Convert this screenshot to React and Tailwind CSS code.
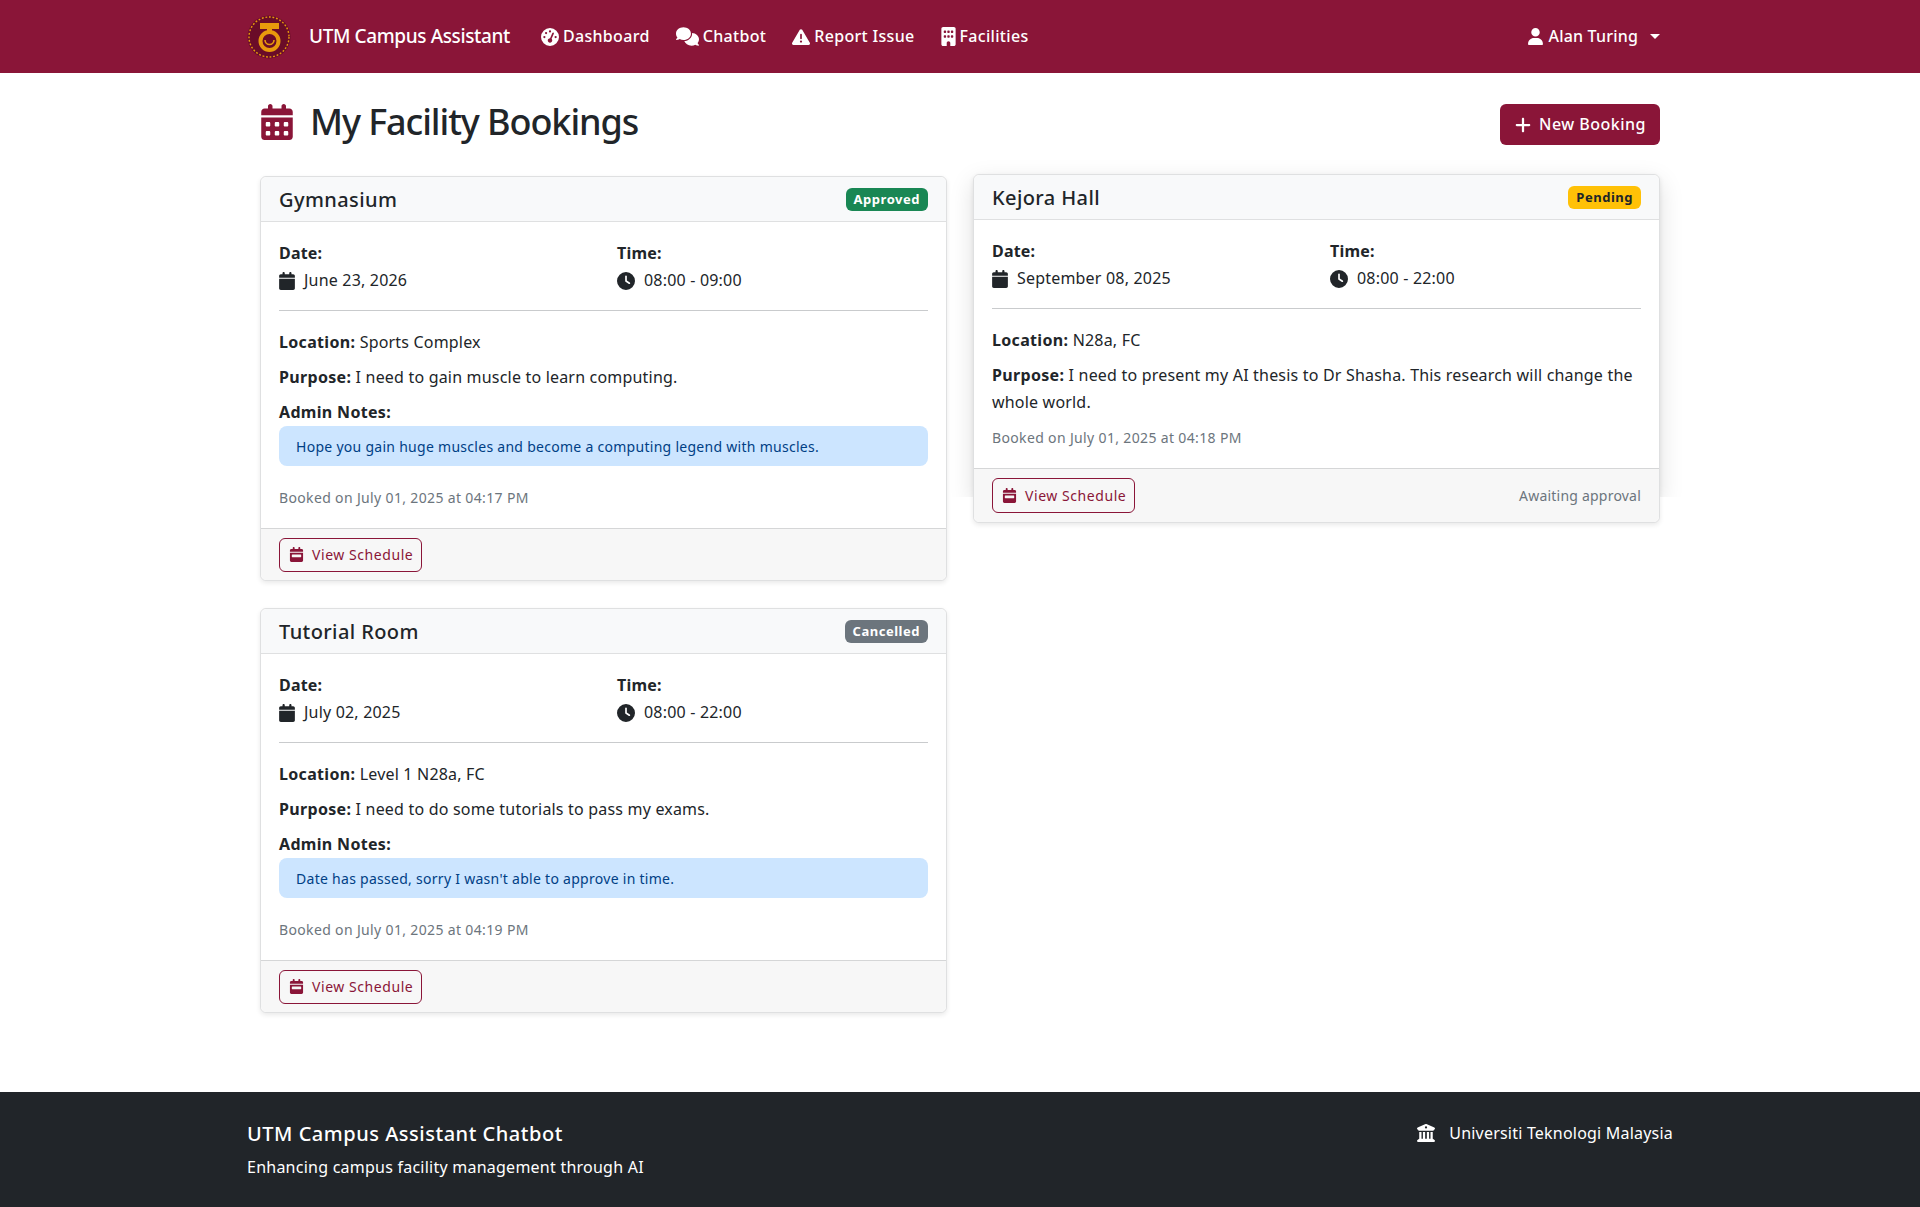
import React from 'react';
import {
  FaBuilding,
  FaBuildingColumns,
  FaCalendar,
  FaCalendarDays,
  FaCalendarWeek,
  FaClock,
  FaComments,
  FaGaugeHigh,
  FaPlus,
  FaTriangleExclamation,
  FaUser,
} from 'react-icons/fa6';

const navLinks = [
  { label: 'Dashboard', icon: FaGaugeHigh, size: 18 },
  { label: 'Chatbot', icon: FaComments, size: 23 },
  { label: 'Report Issue', icon: FaTriangleExclamation, size: 18 },
  { label: 'Facilities', icon: FaBuilding, size: 19, tight: true },
];

const leftBookings = [
  {
    name: 'Gymnasium',
    status: 'Approved',
    badge: 'bg-[#198754] text-white',
    date: 'June 23, 2026',
    time: '08:00 - 09:00',
    location: 'Sports Complex',
    purpose: 'I need to gain muscle to learn computing.',
    notes: 'Hope you gain huge muscles and become a computing legend with muscles.',
    booked: 'Booked on July 01, 2025 at 04:17 PM',
  },
  {
    name: 'Tutorial Room',
    status: 'Cancelled',
    badge: 'bg-[#6c757d] text-white',
    date: 'July 02, 2025',
    time: '08:00 - 22:00',
    location: 'Level 1 N28a, FC',
    purpose: 'I need to do some tutorials to pass my exams.',
    notes: "Date has passed, sorry I wasn't able to approve in time.",
    booked: 'Booked on July 01, 2025 at 04:19 PM',
  },
];

const kejora = {
  name: 'Kejora Hall',
  status: 'Pending',
  badge: 'bg-[#ffc107] text-[#212529]',
  date: 'September 08, 2025',
  time: '08:00 - 22:00',
  location: 'N28a, FC',
  purpose: 'I need to present my AI thesis to Dr Shasha. This research will change the whole world.',
  booked: 'Booked on July 01, 2025 at 04:18 PM',
  awaiting: true,
};

function Logo() {
  return (
    <svg width="44" height="44" viewBox="0 0 44 44" className="shrink-0">
      <circle cx="22" cy="22" r="21.5" fill="#6a0c28" />
      <circle cx="22" cy="22" r="20" fill="none" stroke="#e89a0c" strokeWidth="1.4" strokeDasharray="1.8 1.8" />
      <path d="M13 8h19v6h-7v4h-5v-4h-7z" fill="#e89a0c" />
      <circle cx="22.5" cy="26" r="9" fill="none" stroke="#e89a0c" strokeWidth="4" />
      <path d="M18 25a4.5 4.5 0 0 0 9 0" fill="none" stroke="#e89a0c" strokeWidth="1.6" />
    </svg>
  );
}

function BookingCard({ booking, hovered }) {
  return (
    <div className={`relative ${hovered ? 'mt-[-2px]' : ''}`}>
      {hovered && (
        <div className="absolute inset-x-0 top-0 h-[323px] rounded-[6px] shadow-[0_8px_24px_rgba(0,0,0,0.13)] [clip-path:inset(-40px_-40px_0_-40px)]" />
      )}
      <div className="relative rounded-[6px] border border-[#dfe0e1] bg-white shadow-[0_2px_5px_rgba(0,0,0,0.09)]">
        <div className="flex h-[45px] items-center justify-between rounded-t-[6px] border-b border-[#dfe0e1] bg-[#f8f9fa] px-[18px] pt-[1px]">
          <h5 className="pt-[1px] text-[20px] font-medium leading-none tracking-[0.02em]">{booking.name}</h5>
          <span className={`rounded-[6px] px-[8px] py-[4px] text-[13px] font-bold leading-[15px] tracking-[0.04em] ${booking.badge}`}>
            {booking.status}
          </span>
        </div>

        <div className="px-[18px] pt-[18px] pb-[18px]">
          <div className="grid grid-cols-[338px_1fr] pb-[16px]">
            <div>
              <div className="font-bold">Date:</div>
              <div className="flex items-center">
                <FaCalendar size={18} className="ml-[-1px] mr-[8px]" />
                {booking.date}
              </div>
            </div>
            <div>
              <div className="font-bold">Time:</div>
              <div className="flex items-center">
                <FaClock size={18} className="mr-[9px]" />
                {booking.time}
              </div>
            </div>
          </div>
          <hr className="mb-[18px] border-[#c9cbcd]" />
          <p className="mb-[8px]">
            <span className="font-bold tracking-[0.02em]">Location:</span> {booking.location}
          </p>
          <p className="mb-[8px]">
            <span className="font-bold tracking-[0.02em]">Purpose:</span> {booking.purpose}
          </p>
          {booking.notes && (
            <>
              <div className="font-bold tracking-[0.02em]">Admin Notes:</div>
              <div className="mb-[20px] flex h-[40px] items-center rounded-[8px] bg-[#cce5ff] px-[17px] text-[14px] tracking-[0.02em] text-[#004085]">
                {booking.notes}
              </div>
            </>
          )}
          <div className={`text-[14px] leading-[24px] tracking-[0.025em] text-[#6c757d] ${booking.notes ? '' : 'mt-[10px]'}`}>
            {booking.booked}
          </div>
        </div>

        <div className={`flex items-center justify-between rounded-b-[6px] border-t border-[#d5d6d7] bg-[#f7f7f7] px-[18px] ${hovered ? 'h-[54px]' : 'h-[52px]'}`}>
          <button className={`flex items-center gap-[8px] rounded-[6px] border border-[#8a1538] pl-[9px] pr-[8px] text-[14px] tracking-[0.04em] text-[#8a1538] ${hovered ? 'h-[35px]' : 'h-[34px]'}`}>
            <FaCalendarWeek size={15} />
            View Schedule
          </button>
          {booking.awaiting && <span className="text-[14px] tracking-[0.015em] text-[#6c757d]">Awaiting approval</span>}
        </div>
      </div>
    </div>
  );
}

export default function App() {
  return (
    <div className="flex min-h-[1207px] flex-col bg-white text-[16px] leading-[27px] tracking-[0.012em] text-[#212529] font-['Noto_Sans',sans-serif]">
      <nav className="h-[73px] bg-[#8a1538] text-white">
        <div className="mx-auto flex h-full w-[1426px] items-center pr-[13px]">
          <Logo />
          <span className="ml-[18px] mr-[31px] text-[19px] font-medium tracking-[-0.02em]">UTM Campus Assistant</span>
          <div className="flex items-center gap-[26px]">
            {navLinks.map((link) => (
              <a key={link.label} className="flex items-center gap-[4px] font-medium tracking-[0.02em]">
                <link.icon size={link.size} className={link.tight ? 'mx-[-2px]' : ''} />
                {link.label}
              </a>
            ))}
          </div>
          <div className="ml-auto flex items-center gap-[4px] font-medium tracking-[0.012em]">
            <FaUser size={17} />
            Alan Turing
            <span className="ml-[8px] border-x-[5px] border-t-[5px] border-x-transparent border-t-white" />
          </div>
        </div>
      </nav>

      <main className="mx-auto w-[1400px] flex-1">
        <div className="flex h-[103px] items-center justify-between pb-[6px]">
          <h1 className="flex items-center text-[36px] font-medium leading-none tracking-[-0.03em]">
            <FaCalendarDays size={36} className="ml-[-1px] mr-[15px] text-[#8a1538]" />
            My Facility Bookings
          </h1>
          <button className="mt-[6px] flex h-[41px] w-[160px] items-center justify-center gap-[7px] rounded-[6px] bg-[#8a1538] font-medium tracking-[0.03em] text-white">
            <FaPlus size={18} />
            New Booking
          </button>
        </div>

        <div className="grid grid-cols-2 gap-x-[26px]">
          <div className="flex flex-col gap-[27px]">
            {leftBookings.map((b) => (
              <BookingCard key={b.name} booking={b} />
            ))}
          </div>
          <div>
            <BookingCard booking={kejora} hovered />
          </div>
        </div>
      </main>

      <footer className="h-[115px] bg-[#212529] text-white">
        <div className="mx-auto flex w-[1426px] justify-between pt-[28px]">
          <div>
            <div className="text-[20px] font-medium leading-[28px] tracking-[0.026em]">UTM Campus Assistant Chatbot</div>
            <div className="mt-[6px] tracking-[0.015em]">Enhancing campus facility management through AI</div>
          </div>
          <div className="flex h-[26px] items-center tracking-[0.013em]">
            <FaBuildingColumns size={18} className="mr-[14px]" />
            Universiti Teknologi Malaysia
          </div>
        </div>
      </footer>
    </div>
  );
}
